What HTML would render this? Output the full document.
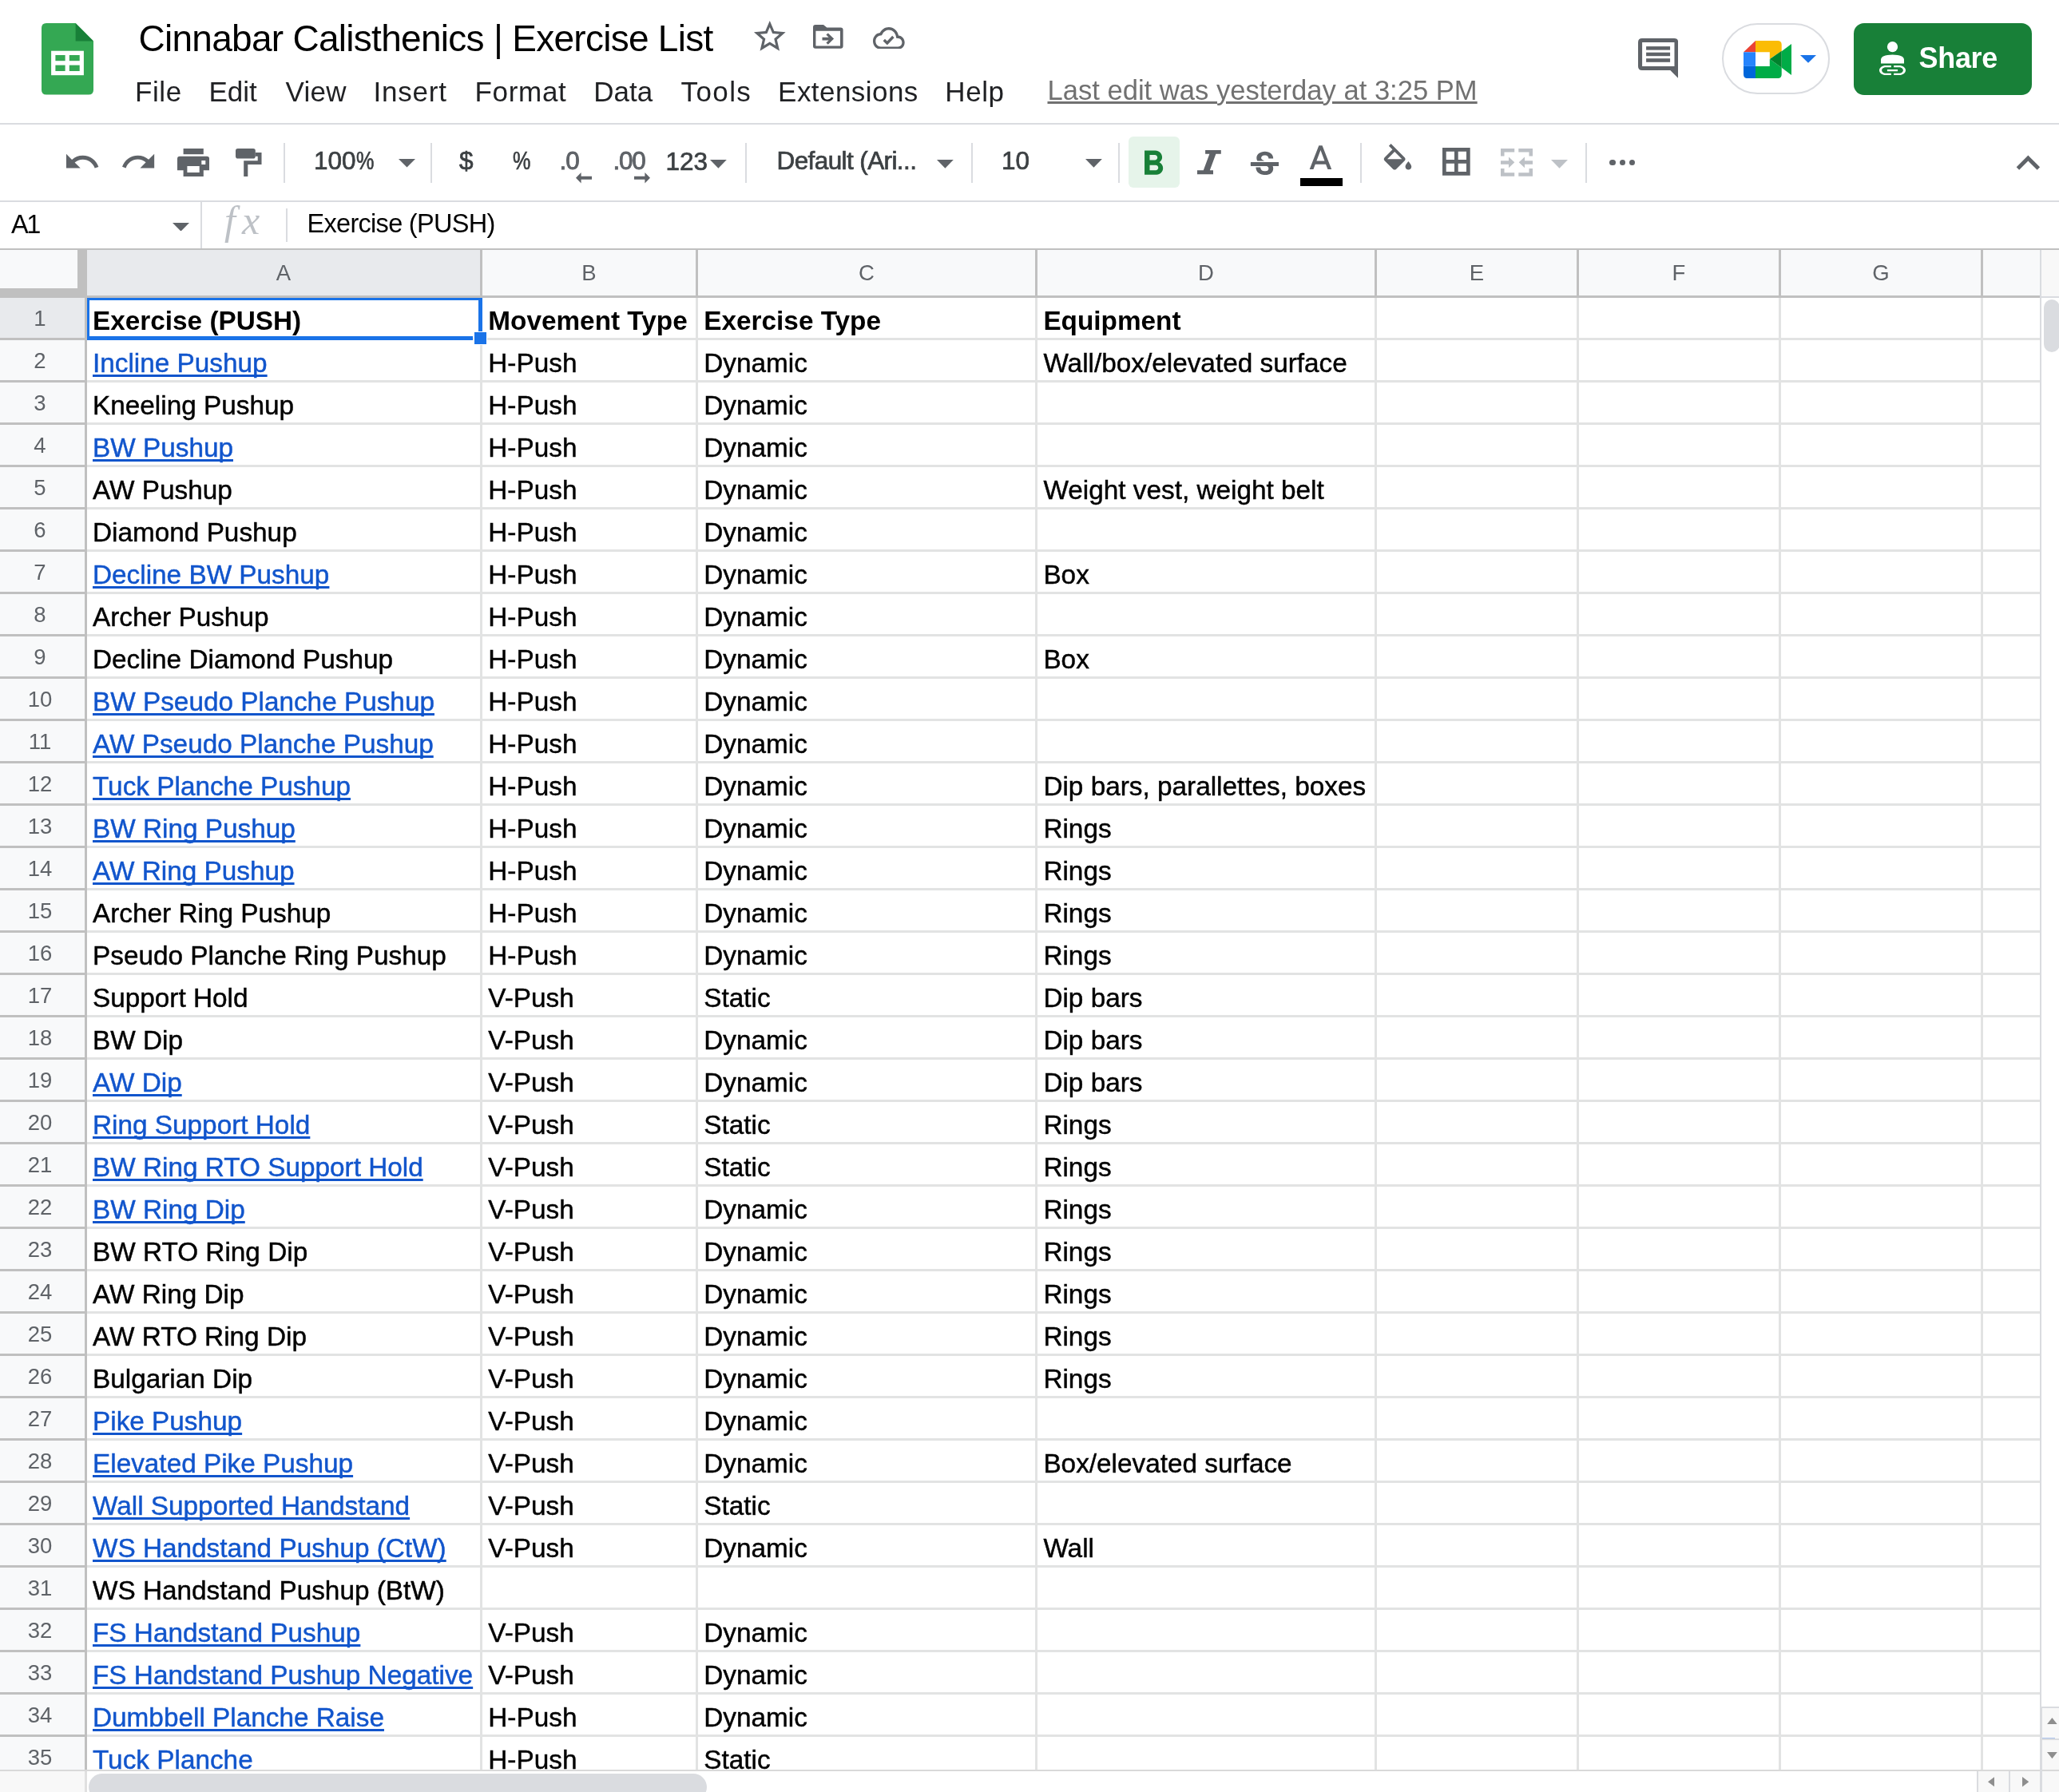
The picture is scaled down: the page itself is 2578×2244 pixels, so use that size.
<!DOCTYPE html>
<html><head><meta charset="utf-8"><title>Cinnabar Calisthenics | Exercise List</title>
<style>
*{margin:0;padding:0;box-sizing:border-box}
html,body{width:2578px;height:2244px;overflow:hidden;background:#fff;font-family:"Liberation Sans",sans-serif;position:relative}
.a{position:absolute;display:block}
.t{position:absolute;white-space:nowrap;line-height:1}
</style></head><body><div id="root" style="position:absolute;left:0;top:0;width:2578px;height:2244px;will-change:transform">
<svg class="a" style="left:52px;top:29px;" width="65" height="89.5" viewBox="0 0 65 89.5" preserveAspectRatio="none"><path d="M6,0 H42.6 L65,22.4 V83.5 Q65,89.5 59,89.5 H6 Q0,89.5 0,83.5 V6 Q0,0 6,0 Z" fill="#34a853"/><path d="M42.6,0 V22.4 H65 Z" fill="#188038"/><rect x="12.1" y="34.7" width="40.8" height="30.5" fill="#fff"/><rect x="17.4" y="40" width="12.2" height="7.2" fill="#34a853"/><rect x="34.8" y="40" width="12.9" height="7.2" fill="#34a853"/><rect x="17.4" y="52.6" width="12.2" height="7.4" fill="#34a853"/><rect x="34.8" y="52.6" width="12.9" height="7.4" fill="#34a853"/></svg>
<div class="t" style="left:173.50px;top:25.46px;font-size:46px;color:#000;font-weight:normal;letter-spacing:-0.72px">Cinnabar Calisthenics | Exercise List</div>
<svg class="a" style="left:939.6px;top:21.6px;" width="47.6" height="47.6" viewBox="0 0 24 24" preserveAspectRatio="none"><path fill="#5f6368" d="M22 9.24l-7.19-.62L12 2 9.19 8.63 2 9.24l5.46 4.73L5.82 21 12 17.27 18.18 21l-1.63-7.03L22 9.24zM12 15.4l-3.76 2.27 1-4.28-3.32-2.88 4.38-.38L12 6.1l1.71 4.04 4.38.38-3.32 2.88 1 4.28L12 15.4z"/></svg>
<svg class="a" style="left:1018.2px;top:31.2px;" width="37.6" height="29.8" viewBox="0 0 37.6 29.8" preserveAspectRatio="none"><path fill="#5f6368" fill-rule="evenodd" d="M3,0 H13 L17.3,3.6 H34.6 Q37.6,3.6 37.6,6.6 V26.8 Q37.6,29.8 34.6,29.8 H3 Q0,29.8 0,26.8 V3 Q0,0 3,0 Z M3.4,7.8 V26.5 H34 V7.8 Z"/><path fill="#5f6368" d="M11.5,15.8 H19.6 L16.4,12.6 L18.8,10.4 L26.1,17.6 L18.8,24.8 L16.4,22.6 L19.6,19.4 H11.5 Z"/></svg>
<svg class="a" style="left:1093.4px;top:33.6px;" width="39.7" height="27.9" viewBox="0 4 24 16" preserveAspectRatio="none"><path fill="#5f6368" d="M19.35 10.04C18.67 6.59 15.64 4 12 4 9.11 4 6.6 5.64 5.35 8.04 2.34 8.36 0 10.91 0 14c0 3.31 2.69 6 6 6h13c2.76 0 5-2.24 5-5 0-2.64-2.05-4.78-4.65-4.96zM19 18H6c-2.21 0-4-1.79-4-4 0-2.05 1.53-3.76 3.56-3.97l1.07-.11.5-.95C8.08 7.14 9.94 6 12 6c2.62 0 4.88 1.86 5.39 4.43l.3 1.5 1.53.11c1.56.1 2.78 1.41 2.78 2.96 0 1.65-1.35 3-3 3z"/></svg>
<svg class="a" style="left:1105px;top:44px;" width="15" height="12" viewBox="0 0 15 12" preserveAspectRatio="none"><polyline points="1.8,6 5.8,10 13.4,2" fill="none" stroke="#5f6368" stroke-width="3.4"/></svg>
<div class="t" style="left:169.00px;top:96.57px;font-size:35px;color:#202124;font-weight:normal;letter-spacing:0.6px">File</div>
<div class="t" style="left:261.50px;top:96.57px;font-size:35px;color:#202124;font-weight:normal;letter-spacing:0px">Edit</div>
<div class="t" style="left:357.60px;top:96.57px;font-size:35px;color:#202124;font-weight:normal;letter-spacing:0.2px">View</div>
<div class="t" style="left:467.40px;top:96.57px;font-size:35px;color:#202124;font-weight:normal;letter-spacing:0.8px">Insert</div>
<div class="t" style="left:594.50px;top:96.57px;font-size:35px;color:#202124;font-weight:normal;letter-spacing:0.7px">Format</div>
<div class="t" style="left:743.30px;top:96.57px;font-size:35px;color:#202124;font-weight:normal;letter-spacing:0px">Data</div>
<div class="t" style="left:852.50px;top:96.57px;font-size:35px;color:#202124;font-weight:normal;letter-spacing:1.4px">Tools</div>
<div class="t" style="left:974.10px;top:96.57px;font-size:35px;color:#202124;font-weight:normal;letter-spacing:0.45px">Extensions</div>
<div class="t" style="left:1183.30px;top:96.57px;font-size:35px;color:#202124;font-weight:normal;letter-spacing:0.6px">Help</div>
<div class="t" style="left:1311.50px;top:95.71px;font-size:34.6px;color:#717171;font-weight:normal;text-decoration:underline;text-underline-offset:2px;text-decoration-thickness:2.7px">Last edit was yesterday at 3:25 PM</div>
<svg class="a" style="left:2050.7px;top:48px;" width="50.2" height="50" viewBox="0 0 50.2 50" preserveAspectRatio="none"><path fill="#5f6368" fill-rule="evenodd" d="M5,0 H45.2 Q50.2,0 50.2,5 V50 L40.3,39.9 H5 Q0,39.9 0,34.9 V5 Q0,0 5,0 Z M5.1,5 V35.1 H45.5 V5 Z"/><rect x="10.1" y="10.1" width="30" height="4.5" fill="#5f6368"/><rect x="10.1" y="17.7" width="30" height="4.5" fill="#5f6368"/><rect x="10.1" y="25.2" width="30" height="4.6" fill="#5f6368"/></svg>
<div class="a" style="left:2156.2px;top:29.4px;width:134.5px;height:89px;border:2.5px solid #dadce0;border-radius:45px;box-sizing:border-box"></div>
<svg class="a" style="left:2183px;top:50.9px;" width="60" height="47.1" viewBox="0 0 60 47.1" preserveAspectRatio="none"><path d="M0,14.3 L15,0 V14.3 Z" fill="#ea4335"/><path d="M15,0 H42.7 Q47.7,0 47.7,5 V14.3 L47.7,13 L32.8,22.7 H32.8 V14.3 H15 Z" fill="#fbbc04"/><rect x="0" y="14.3" width="15" height="17.6" fill="#2684fc"/><path d="M0,31.9 H15 V47.1 H5 Q0,47.1 0,42.1 Z" fill="#0066da"/><path d="M15,31.9 H32.8 V23.1 L47.7,33.7 V42.1 Q47.7,47.1 42.7,47.1 H15 Z" fill="#00ac47"/><path d="M47.7,13.2 L60,4.1 V42.9 L47.7,33.7 Z" fill="#00ac47"/><path d="M32.8,23.1 L47.7,12.7 V33.7 Z" fill="#00832d"/></svg>
<svg class="a" style="left:2254px;top:69px;" width="20" height="9.700000000000003" viewBox="0 0 20 9.700000000000003" preserveAspectRatio="none"><polygon points="0,0 20,0 10.0,9.700000000000003" fill="#1a73e8"/></svg>
<div class="a" style="left:2321px;top:28.8px;width:223px;height:90px;background:#188038;border-radius:13px"></div>
<svg class="a" style="left:2353px;top:51.5px;" width="33" height="30" viewBox="0 0 33 30" preserveAspectRatio="none"><circle cx="16.5" cy="6.7" r="6.6" fill="#fff"/><path d="M2,27.5 V23 Q2,16.5 16.5,16.5 Q31,16.5 31,23 V27.5 Z" fill="#fff"/></svg>
<svg class="a" style="left:2353px;top:81.8px;" width="33" height="12.2" viewBox="2 7 20 10" preserveAspectRatio="none"><path fill="#fff" d="M3.9 12c0-1.71 1.39-3.1 3.1-3.1h4V7H7c-2.76 0-5 2.24-5 5s2.24 5 5 5h4v-1.9H7c-1.71 0-3.1-1.39-3.1-3.1zM8 13h8v-2H8v2zm9-6h-4v1.9h4c1.71 0 3.1 1.39 3.1 3.1s-1.39 3.1-3.1 3.1h-4V17h4c2.760 0 5-2.24 5-5s-2.24-5-5-5z"/></svg>
<div class="t" style="left:2402.50px;top:55.03px;font-size:36px;color:#fff;font-weight:bold;letter-spacing:-0.3px">Share</div>
<div class="a" style="left:0px;top:154px;width:2578px;height:2px;background:#dadce0;"></div>
<svg class="a" style="left:79.05px;top:179.4px;" width="47.4" height="47.4" viewBox="0 0 24 24" preserveAspectRatio="none"><path fill="#5f6368" d="M12.5 8c-2.650 0-5.050.99-6.9 2.6L2 7v9h9l-3.62-3.62c1.39-1.16 3.16-1.88 5.12-1.88 3.54 0 6.55 2.31 7.6 5.5l2.37-.78C21.08 11.03 17.15 8 12.5 8z"/></svg>
<svg class="a" style="left:149.8px;top:179.4px;" width="47.1" height="47.1" viewBox="0 0 24 24" preserveAspectRatio="none"><path fill="#5f6368" d="M18.4 10.6C16.55 8.99 14.15 8 11.5 8c-4.65 0-8.58 3.03-9.96 7.22L3.9 16c1.05-3.19 4.05-5.5 7.6-5.5 1.95 0 3.73.72 5.12 1.88L13 16h9V7l-3.6 3.6z"/></svg>
<svg class="a" style="left:221.7px;top:186px;" width="40.1" height="35" viewBox="0 0 40.1 35" preserveAspectRatio="none"><rect x="7.6" y="0" width="25.2" height="7.2" fill="#5f6368"/><path fill="#5f6368" d="M3,9.8 H37.1 Q40.1,9.8 40.1,12.8 V27.2 H32.8 V35 H7.6 V27.2 H0 V12.8 Q0,9.8 3,9.8 Z M12.4,22 V30.1 H27.7 V22 Z"/><rect x="30.3" y="15" width="5" height="5" fill="#fff"/></svg>
<svg class="a" style="left:295.3px;top:186px;" width="32.5" height="35" viewBox="0 0 32.5 35" preserveAspectRatio="none"><rect x="0" y="0" width="24.8" height="12.6" rx="2.8" fill="#5f6368"/><path fill="#5f6368" d="M24.8,5 H32.5 V19.9 H15.3 V35 H10.2 V15.2 H27.7 V9.7 H24.8 Z"/></svg>
<div class="a" style="left:355px;top:179px;width:2px;height:49.5px;background:#dadce0;"></div>
<div class="t" style="left:393.00px;top:185.54px;font-size:31.5px;color:#3c4043;font-weight:normal;-webkit-text-stroke:0.7px #3c4043">100<span style="display:inline-block;transform:scaleX(0.8);transform-origin:0 0">%</span></div>
<svg class="a" style="left:499px;top:199px;" width="21" height="10.5" viewBox="0 0 21 10.5" preserveAspectRatio="none"><polygon points="0,0 21,0 10.5,10.5" fill="#5f6368"/></svg>
<div class="a" style="left:539.2px;top:179px;width:2px;height:49.5px;background:#dadce0;"></div>
<div class="t" style="left:575.00px;top:185.54px;font-size:31.5px;color:#3c4043;font-weight:normal;-webkit-text-stroke:0.7px #3c4043">$</div>
<div class="t" style="left:642.00px;top:185.54px;font-size:31.5px;color:#3c4043;font-weight:normal;-webkit-text-stroke:0.7px #3c4043"><span style="display:inline-block;transform:scaleX(0.8);transform-origin:0 0">%</span></div>
<div class="t" style="left:700.50px;top:186.04px;font-size:31.5px;color:#5f6368;font-weight:normal;letter-spacing:-1px;-webkit-text-stroke:0.9px #5f6368">.0</div>
<svg class="a" style="left:721px;top:216px;" width="20" height="13.6" viewBox="0 0 20 13.6" preserveAspectRatio="none"><path fill="#5f6368" d="M0,6.8 L6.6,0 V4.8 H20 V8.8 H6.6 V13.6 Z"/></svg>
<div class="t" style="left:767.50px;top:186.04px;font-size:31.5px;color:#5f6368;font-weight:normal;letter-spacing:-1.2px;-webkit-text-stroke:0.9px #5f6368">.00</div>
<svg class="a" style="left:794.4px;top:216px;" width="20" height="13.6" viewBox="0 0 20 13.6" preserveAspectRatio="none"><path fill="#5f6368" d="M20,6.8 L13.4,0 V4.8 H0 V8.8 H13.4 V13.6 Z"/></svg>
<div class="t" style="left:833.50px;top:186.54px;font-size:31.5px;color:#3c4043;font-weight:normal;-webkit-text-stroke:0.7px #3c4043">123</div>
<svg class="a" style="left:889px;top:200px;" width="20.799999999999955" height="10.699999999999989" viewBox="0 0 20.799999999999955 10.699999999999989" preserveAspectRatio="none"><polygon points="0,0 20.799999999999955,0 10.399999999999977,10.699999999999989" fill="#5f6368"/></svg>
<div class="a" style="left:933px;top:179px;width:2px;height:49.5px;background:#dadce0;"></div>
<div class="t" style="left:972.50px;top:186.04px;font-size:31.5px;color:#3c4043;font-weight:normal;-webkit-text-stroke:0.7px #3c4043;letter-spacing:-0.6px">Default (Ari...</div>
<svg class="a" style="left:1173.2px;top:200px;" width="20.799999999999955" height="10.699999999999989" viewBox="0 0 20.799999999999955 10.699999999999989" preserveAspectRatio="none"><polygon points="0,0 20.799999999999955,0 10.399999999999977,10.699999999999989" fill="#5f6368"/></svg>
<div class="a" style="left:1215.5px;top:179px;width:2px;height:49.5px;background:#dadce0;"></div>
<div class="t" style="left:1254.00px;top:185.54px;font-size:31.5px;color:#3c4043;font-weight:normal;-webkit-text-stroke:0.7px #3c4043">10</div>
<svg class="a" style="left:1358.9px;top:199px;" width="20.899999999999864" height="10.800000000000011" viewBox="0 0 20.899999999999864 10.800000000000011" preserveAspectRatio="none"><polygon points="0,0 20.899999999999864,0 10.449999999999932,10.800000000000011" fill="#5f6368"/></svg>
<div class="a" style="left:1399.5px;top:179px;width:2px;height:49.5px;background:#dadce0;"></div>
<div class="a" style="left:1413.3px;top:170.9px;width:63.3px;height:63.7px;background:#e6f4ea;border-radius:6px"></div>
<svg class="a" style="left:1418px;top:180.3px;" width="51.6" height="51.6" viewBox="0 0 24 24" preserveAspectRatio="none"><path fill="#188038" d="M15.6 10.79c.97-.67 1.65-1.77 1.65-2.79 0-2.26-1.75-4-4-4H7v14h7.04c2.09 0 3.71-1.7 3.71-3.79 0-1.52-.86-2.82-2.15-3.42zM10 6.5h3c.83 0 1.5.67 1.5 1.5s-.67 1.5-1.5 1.5h-3v-3zm3.5 9H10v-3h3.5c.83 0 1.5.67 1.5 1.5s-.67 1.5-1.5 1.5z"/></svg>
<svg class="a" style="left:1499px;top:188.4px;" width="29.8" height="30.2" viewBox="0 0 29.8 30.2" preserveAspectRatio="none"><path fill="#5f6368" d="M10.1,0 H29.8 V4.8 H23.4 L15.8,25.2 H20 V30.2 H0 V25.2 H7.8 L15.4,4.8 H10.1 Z"/></svg>
<svg class="a" style="left:1560.2px;top:184px;" width="46.6" height="46.6" viewBox="0 0 24 24" preserveAspectRatio="none"><path fill="#5f6368" d="M7.24 8.75c-.26-.48-.39-1.03-.39-1.67 0-.61.13-1.16.4-1.67.26-.5.63-.93 1.11-1.29.48-.35 1.05-.63 1.7-.83.66-.19 1.39-.29 2.18-.29.81 0 1.54.11 2.21.34.66.22 1.23.54 1.69.94.47.4.83.88 1.08 1.43.25.55.38 1.15.38 1.81h-3.01c0-.31-.05-.59-.15-.85-.09-.27-.24-.49-.44-.68-.2-.19-.45-.33-.75-.44-.3-.1-.66-.16-1.060-.16-.39 0-.74.04-1.03.13-.29.09-.53.21-.72.36-.19.16-.34.34-.44.55-.1.21-.15.43-.15.66 0 .48.25.88.74 1.21.38.25.77.48 1.41.7H7.39c-.05-.08-.11-.17-.15-.25zM21 12v-2H3v2h9.62c.18.07.4.14.55.2.37.17.66.34.87.51.21.17.35.36.43.57.07.2.11.43.11.69 0 .23-.05.45-.14.66-.09.2-.23.38-.42.53-.19.15-.42.26-.71.35-.29.08-.63.13-1.01.13-.43 0-.83-.04-1.18-.13s-.66-.23-.91-.42c-.25-.19-.45-.44-.59-.75-.14-.31-.25-.76-.25-1.21H6.4c0 .55.08 1.13.24 1.58.16.45.37.85.65 1.21.28.35.6.66.98.92.37.26.78.48 1.22.65.44.17.9.3 1.38.39.48.08.96.13 1.44.13.8 0 1.53-.09 2.18-.28s1.21-.45 1.67-.79c.46-.34.82-.77 1.07-1.27s.38-1.07.38-1.71c0-.6-.1-1.14-.31-1.61-.05-.11-.11-.23-.17-.33H21z"/></svg>
<div class="a" style="left:1566px;top:203.3px;width:35px;height:5.2px;background:#5f6368;"></div>
<svg class="a" style="left:1628.3px;top:175.9px;" width="50.9" height="50.9" viewBox="0 0 24 24" preserveAspectRatio="none"><path fill="#5f6368" d="M11 3L5.5 17h2.25l1.12-3h6.25l1.12 3h2.25L13 3h-2zm-1.38 9L12 5.67 14.38 12H9.62z"/></svg>
<div class="a" style="left:1628px;top:223px;width:53px;height:10px;background:#000;"></div>
<div class="a" style="left:1702.5px;top:179px;width:2px;height:49.5px;background:#dadce0;"></div>
<svg class="a" style="left:1726.5px;top:180px;" width="46" height="46" viewBox="0 0 24 24" preserveAspectRatio="none"><path fill="#5f6368" d="M16.56 8.94L7.62 0 6.21 1.41l2.38 2.38-5.15 5.15c-.59.59-.59 1.54 0 2.12l5.5 5.5c.29.29.68.44 1.06.44s.77-.15 1.06-.44l5.5-5.5c.59-.58.59-1.53 0-2.12zM5.21 10L10 5.21 14.79 10H5.21zM19 11.5s-2 2.17-2 3.5c0 1.1.9 2 2 2s2-.9 2-2c0-1.33-2-3.5-2-3.5z"/></svg>
<svg class="a" style="left:1806px;top:185px;" width="34.7" height="34.7" viewBox="0 0 34.7 34.7" preserveAspectRatio="none"><path fill="#5f6368" fill-rule="evenodd" d="M0,0 H34.7 V34.7 H0 Z M4.7,4.7 V15 H15 V4.7 Z M19.7,4.7 V15 H30 V4.7 Z M4.7,19.7 V30 H15 V19.7 Z M19.7,19.7 V30 H30 V19.7 Z"/></svg>
<svg class="a" style="left:1879px;top:186.2px;" width="40" height="34.7" viewBox="0 0 40 34.7" preserveAspectRatio="none"><path fill="#bdc1c6" d="M0,0 H17.2 V4.5 H4.5 V9.5 H0 Z M22.3,0 H40 V9.5 H35.5 V4.5 H22.3 Z M0,25 H4.5 V30.2 H17.2 V34.7 H0 Z M35.5,25 H40 V34.7 H22.3 V30.2 H35.5 Z"/><path fill="#bdc1c6" d="M0,15.2 H10 V10.5 L17.3,17.3 L10,24.3 V19.7 H0 Z M40,15.2 H30 V10.5 L22.7,17.3 L30,24.3 V19.7 H40 Z"/></svg>
<svg class="a" style="left:1942px;top:200px;" width="21" height="10.699999999999989" viewBox="0 0 21 10.699999999999989" preserveAspectRatio="none"><polygon points="0,0 21,0 10.5,10.699999999999989" fill="#bdc1c6"/></svg>
<div class="a" style="left:1985px;top:179px;width:2px;height:49.5px;background:#dadce0;"></div>
<div class="a" style="left:2015.2px;top:199.70000000000002px;width:7.4px;height:7.4px;border-radius:50%;background:#5f6368"></div>
<div class="a" style="left:2027.6px;top:199.70000000000002px;width:7.4px;height:7.4px;border-radius:50%;background:#5f6368"></div>
<div class="a" style="left:2039.8999999999999px;top:199.70000000000002px;width:7.4px;height:7.4px;border-radius:50%;background:#5f6368"></div>
<svg class="a" style="left:2510.2px;top:175px;" width="58.8" height="58.8" viewBox="0 0 24 24" preserveAspectRatio="none"><path fill="#5f6368" d="M12 8l-6 6 1.41 1.41L12 10.83l4.59 4.58L18 14z"/></svg>
<div class="a" style="left:0px;top:251px;width:2578px;height:2px;background:#dadce0;"></div>
<div class="t" style="left:14.00px;top:265.29px;font-size:32.5px;color:#000;font-weight:normal;letter-spacing:-2.5px">A1</div>
<svg class="a" style="left:216px;top:278.9px;" width="21" height="10.600000000000023" viewBox="0 0 21 10.600000000000023" preserveAspectRatio="none"><polygon points="0,0 21,0 10.5,10.600000000000023" fill="#5f6368"/></svg>
<div class="a" style="left:251px;top:253px;width:2px;height:58px;background:#dadce0;"></div>
<div class="t" style="left:281.00px;top:250.68px;font-size:50px;color:#bdc1c6;font-weight:normal;font-family:'Liberation Serif',serif"><i>f</i><i style="margin-left:8px">x</i></div>
<div class="a" style="left:357.5px;top:261px;width:2.5px;height:41.5px;background:#dadce0;"></div>
<div class="t" style="left:384.50px;top:264.29px;font-size:32.5px;color:#000;font-weight:normal;letter-spacing:-0.7px">Exercise (PUSH)</div>
<div class="a" style="left:0px;top:311px;width:2578px;height:2px;background:#c0c0c0;"></div>
<div class="a" style="left:109px;top:313px;width:2445px;height:57px;background:#f8f9fa;"></div>
<div class="a" style="left:109px;top:313px;width:492px;height:57px;background:#e8eaed;"></div>
<div class="a" style="left:2556px;top:313px;width:22px;height:58px;background:#f8f8f8;"></div>
<div class="a" style="left:0px;top:313px;width:97px;height:48px;background:#f8f9fa;"></div>
<div class="a" style="left:97px;top:313px;width:12px;height:60px;background:#c0c0c0;"></div>
<div class="a" style="left:0px;top:361px;width:97px;height:12px;background:#c0c0c0;"></div>
<div class="a" style="left:109px;top:370px;width:2445px;height:3px;background:#c0c0c0;"></div>
<div class="a" style="left:2556px;top:371px;width:22px;height:2px;background:#dadce0;"></div>
<div class="a" style="left:601px;top:313px;width:3px;height:57px;background:#c0c0c0;"></div>
<div class="a" style="left:871px;top:313px;width:3px;height:57px;background:#c0c0c0;"></div>
<div class="a" style="left:1296px;top:313px;width:3px;height:57px;background:#c0c0c0;"></div>
<div class="a" style="left:1721px;top:313px;width:3px;height:57px;background:#c0c0c0;"></div>
<div class="a" style="left:1974px;top:313px;width:3px;height:57px;background:#c0c0c0;"></div>
<div class="a" style="left:2227px;top:313px;width:3px;height:57px;background:#c0c0c0;"></div>
<div class="a" style="left:2480px;top:313px;width:3px;height:57px;background:#c0c0c0;"></div>
<div class="t" style="left:109px;width:492px;text-align:center;top:327.72px;font-size:27.5px;color:#5f6368">A</div>
<div class="t" style="left:604px;width:267px;text-align:center;top:327.72px;font-size:27.5px;color:#5f6368">B</div>
<div class="t" style="left:874px;width:422px;text-align:center;top:327.72px;font-size:27.5px;color:#5f6368">C</div>
<div class="t" style="left:1299px;width:422px;text-align:center;top:327.72px;font-size:27.5px;color:#5f6368">D</div>
<div class="t" style="left:1724px;width:250px;text-align:center;top:327.72px;font-size:27.5px;color:#5f6368">E</div>
<div class="t" style="left:1977px;width:250px;text-align:center;top:327.72px;font-size:27.5px;color:#5f6368">F</div>
<div class="t" style="left:2230px;width:250px;text-align:center;top:327.72px;font-size:27.5px;color:#5f6368">G</div>
<div class="a" style="left:0px;top:373px;width:106px;height:1843px;background:#f8f9fa;"></div>
<div class="a" style="left:0px;top:373px;width:106px;height:50px;background:#e8eaed;"></div>
<div class="a" style="left:106px;top:373px;width:3px;height:1843px;background:#c0c0c0;"></div>
<div class="a" style="left:601px;top:373px;width:3px;height:1843px;background:#e2e3e3;"></div>
<div class="a" style="left:871px;top:373px;width:3px;height:1843px;background:#e2e3e3;"></div>
<div class="a" style="left:1296px;top:373px;width:3px;height:1843px;background:#e2e3e3;"></div>
<div class="a" style="left:1721px;top:373px;width:3px;height:1843px;background:#e2e3e3;"></div>
<div class="a" style="left:1974px;top:373px;width:3px;height:1843px;background:#e2e3e3;"></div>
<div class="a" style="left:2227px;top:373px;width:3px;height:1843px;background:#e2e3e3;"></div>
<div class="a" style="left:2480px;top:373px;width:3px;height:1843px;background:#e2e3e3;"></div>
<div class="a" style="left:2554px;top:313px;width:2px;height:1905px;background:#dadce0;"></div>
<div class="a" style="left:0px;top:423px;width:106px;height:3px;background:#c0c0c0;"></div>
<div class="a" style="left:109px;top:423px;width:2445px;height:3px;background:#e2e3e3;"></div>
<div class="a" style="left:0px;top:476px;width:106px;height:3px;background:#c0c0c0;"></div>
<div class="a" style="left:109px;top:476px;width:2445px;height:3px;background:#e2e3e3;"></div>
<div class="a" style="left:0px;top:529px;width:106px;height:3px;background:#c0c0c0;"></div>
<div class="a" style="left:109px;top:529px;width:2445px;height:3px;background:#e2e3e3;"></div>
<div class="a" style="left:0px;top:582px;width:106px;height:3px;background:#c0c0c0;"></div>
<div class="a" style="left:109px;top:582px;width:2445px;height:3px;background:#e2e3e3;"></div>
<div class="a" style="left:0px;top:635px;width:106px;height:3px;background:#c0c0c0;"></div>
<div class="a" style="left:109px;top:635px;width:2445px;height:3px;background:#e2e3e3;"></div>
<div class="a" style="left:0px;top:688px;width:106px;height:3px;background:#c0c0c0;"></div>
<div class="a" style="left:109px;top:688px;width:2445px;height:3px;background:#e2e3e3;"></div>
<div class="a" style="left:0px;top:741px;width:106px;height:3px;background:#c0c0c0;"></div>
<div class="a" style="left:109px;top:741px;width:2445px;height:3px;background:#e2e3e3;"></div>
<div class="a" style="left:0px;top:794px;width:106px;height:3px;background:#c0c0c0;"></div>
<div class="a" style="left:109px;top:794px;width:2445px;height:3px;background:#e2e3e3;"></div>
<div class="a" style="left:0px;top:847px;width:106px;height:3px;background:#c0c0c0;"></div>
<div class="a" style="left:109px;top:847px;width:2445px;height:3px;background:#e2e3e3;"></div>
<div class="a" style="left:0px;top:900px;width:106px;height:3px;background:#c0c0c0;"></div>
<div class="a" style="left:109px;top:900px;width:2445px;height:3px;background:#e2e3e3;"></div>
<div class="a" style="left:0px;top:953px;width:106px;height:3px;background:#c0c0c0;"></div>
<div class="a" style="left:109px;top:953px;width:2445px;height:3px;background:#e2e3e3;"></div>
<div class="a" style="left:0px;top:1006px;width:106px;height:3px;background:#c0c0c0;"></div>
<div class="a" style="left:109px;top:1006px;width:2445px;height:3px;background:#e2e3e3;"></div>
<div class="a" style="left:0px;top:1059px;width:106px;height:3px;background:#c0c0c0;"></div>
<div class="a" style="left:109px;top:1059px;width:2445px;height:3px;background:#e2e3e3;"></div>
<div class="a" style="left:0px;top:1112px;width:106px;height:3px;background:#c0c0c0;"></div>
<div class="a" style="left:109px;top:1112px;width:2445px;height:3px;background:#e2e3e3;"></div>
<div class="a" style="left:0px;top:1165px;width:106px;height:3px;background:#c0c0c0;"></div>
<div class="a" style="left:109px;top:1165px;width:2445px;height:3px;background:#e2e3e3;"></div>
<div class="a" style="left:0px;top:1218px;width:106px;height:3px;background:#c0c0c0;"></div>
<div class="a" style="left:109px;top:1218px;width:2445px;height:3px;background:#e2e3e3;"></div>
<div class="a" style="left:0px;top:1271px;width:106px;height:3px;background:#c0c0c0;"></div>
<div class="a" style="left:109px;top:1271px;width:2445px;height:3px;background:#e2e3e3;"></div>
<div class="a" style="left:0px;top:1324px;width:106px;height:3px;background:#c0c0c0;"></div>
<div class="a" style="left:109px;top:1324px;width:2445px;height:3px;background:#e2e3e3;"></div>
<div class="a" style="left:0px;top:1377px;width:106px;height:3px;background:#c0c0c0;"></div>
<div class="a" style="left:109px;top:1377px;width:2445px;height:3px;background:#e2e3e3;"></div>
<div class="a" style="left:0px;top:1430px;width:106px;height:3px;background:#c0c0c0;"></div>
<div class="a" style="left:109px;top:1430px;width:2445px;height:3px;background:#e2e3e3;"></div>
<div class="a" style="left:0px;top:1483px;width:106px;height:3px;background:#c0c0c0;"></div>
<div class="a" style="left:109px;top:1483px;width:2445px;height:3px;background:#e2e3e3;"></div>
<div class="a" style="left:0px;top:1536px;width:106px;height:3px;background:#c0c0c0;"></div>
<div class="a" style="left:109px;top:1536px;width:2445px;height:3px;background:#e2e3e3;"></div>
<div class="a" style="left:0px;top:1589px;width:106px;height:3px;background:#c0c0c0;"></div>
<div class="a" style="left:109px;top:1589px;width:2445px;height:3px;background:#e2e3e3;"></div>
<div class="a" style="left:0px;top:1642px;width:106px;height:3px;background:#c0c0c0;"></div>
<div class="a" style="left:109px;top:1642px;width:2445px;height:3px;background:#e2e3e3;"></div>
<div class="a" style="left:0px;top:1695px;width:106px;height:3px;background:#c0c0c0;"></div>
<div class="a" style="left:109px;top:1695px;width:2445px;height:3px;background:#e2e3e3;"></div>
<div class="a" style="left:0px;top:1748px;width:106px;height:3px;background:#c0c0c0;"></div>
<div class="a" style="left:109px;top:1748px;width:2445px;height:3px;background:#e2e3e3;"></div>
<div class="a" style="left:0px;top:1801px;width:106px;height:3px;background:#c0c0c0;"></div>
<div class="a" style="left:109px;top:1801px;width:2445px;height:3px;background:#e2e3e3;"></div>
<div class="a" style="left:0px;top:1854px;width:106px;height:3px;background:#c0c0c0;"></div>
<div class="a" style="left:109px;top:1854px;width:2445px;height:3px;background:#e2e3e3;"></div>
<div class="a" style="left:0px;top:1907px;width:106px;height:3px;background:#c0c0c0;"></div>
<div class="a" style="left:109px;top:1907px;width:2445px;height:3px;background:#e2e3e3;"></div>
<div class="a" style="left:0px;top:1960px;width:106px;height:3px;background:#c0c0c0;"></div>
<div class="a" style="left:109px;top:1960px;width:2445px;height:3px;background:#e2e3e3;"></div>
<div class="a" style="left:0px;top:2013px;width:106px;height:3px;background:#c0c0c0;"></div>
<div class="a" style="left:109px;top:2013px;width:2445px;height:3px;background:#e2e3e3;"></div>
<div class="a" style="left:0px;top:2066px;width:106px;height:3px;background:#c0c0c0;"></div>
<div class="a" style="left:109px;top:2066px;width:2445px;height:3px;background:#e2e3e3;"></div>
<div class="a" style="left:0px;top:2119px;width:106px;height:3px;background:#c0c0c0;"></div>
<div class="a" style="left:109px;top:2119px;width:2445px;height:3px;background:#e2e3e3;"></div>
<div class="a" style="left:0px;top:2172px;width:106px;height:3px;background:#c0c0c0;"></div>
<div class="a" style="left:109px;top:2172px;width:2445px;height:3px;background:#e2e3e3;"></div>
<div class="t" style="left:0;width:100px;text-align:center;top:384.72px;font-size:27.5px;color:#5f6368">1</div>
<div class="t" style="left:0;width:100px;text-align:center;top:437.72px;font-size:27.5px;color:#5f6368">2</div>
<div class="t" style="left:0;width:100px;text-align:center;top:490.72px;font-size:27.5px;color:#5f6368">3</div>
<div class="t" style="left:0;width:100px;text-align:center;top:543.72px;font-size:27.5px;color:#5f6368">4</div>
<div class="t" style="left:0;width:100px;text-align:center;top:596.72px;font-size:27.5px;color:#5f6368">5</div>
<div class="t" style="left:0;width:100px;text-align:center;top:649.72px;font-size:27.5px;color:#5f6368">6</div>
<div class="t" style="left:0;width:100px;text-align:center;top:702.72px;font-size:27.5px;color:#5f6368">7</div>
<div class="t" style="left:0;width:100px;text-align:center;top:755.72px;font-size:27.5px;color:#5f6368">8</div>
<div class="t" style="left:0;width:100px;text-align:center;top:808.72px;font-size:27.5px;color:#5f6368">9</div>
<div class="t" style="left:0;width:100px;text-align:center;top:861.72px;font-size:27.5px;color:#5f6368">10</div>
<div class="t" style="left:0;width:100px;text-align:center;top:914.72px;font-size:27.5px;color:#5f6368">11</div>
<div class="t" style="left:0;width:100px;text-align:center;top:967.72px;font-size:27.5px;color:#5f6368">12</div>
<div class="t" style="left:0;width:100px;text-align:center;top:1020.72px;font-size:27.5px;color:#5f6368">13</div>
<div class="t" style="left:0;width:100px;text-align:center;top:1073.72px;font-size:27.5px;color:#5f6368">14</div>
<div class="t" style="left:0;width:100px;text-align:center;top:1126.72px;font-size:27.5px;color:#5f6368">15</div>
<div class="t" style="left:0;width:100px;text-align:center;top:1179.72px;font-size:27.5px;color:#5f6368">16</div>
<div class="t" style="left:0;width:100px;text-align:center;top:1232.72px;font-size:27.5px;color:#5f6368">17</div>
<div class="t" style="left:0;width:100px;text-align:center;top:1285.72px;font-size:27.5px;color:#5f6368">18</div>
<div class="t" style="left:0;width:100px;text-align:center;top:1338.72px;font-size:27.5px;color:#5f6368">19</div>
<div class="t" style="left:0;width:100px;text-align:center;top:1391.72px;font-size:27.5px;color:#5f6368">20</div>
<div class="t" style="left:0;width:100px;text-align:center;top:1444.72px;font-size:27.5px;color:#5f6368">21</div>
<div class="t" style="left:0;width:100px;text-align:center;top:1497.72px;font-size:27.5px;color:#5f6368">22</div>
<div class="t" style="left:0;width:100px;text-align:center;top:1550.72px;font-size:27.5px;color:#5f6368">23</div>
<div class="t" style="left:0;width:100px;text-align:center;top:1603.72px;font-size:27.5px;color:#5f6368">24</div>
<div class="t" style="left:0;width:100px;text-align:center;top:1656.72px;font-size:27.5px;color:#5f6368">25</div>
<div class="t" style="left:0;width:100px;text-align:center;top:1709.72px;font-size:27.5px;color:#5f6368">26</div>
<div class="t" style="left:0;width:100px;text-align:center;top:1762.72px;font-size:27.5px;color:#5f6368">27</div>
<div class="t" style="left:0;width:100px;text-align:center;top:1815.72px;font-size:27.5px;color:#5f6368">28</div>
<div class="t" style="left:0;width:100px;text-align:center;top:1868.72px;font-size:27.5px;color:#5f6368">29</div>
<div class="t" style="left:0;width:100px;text-align:center;top:1921.72px;font-size:27.5px;color:#5f6368">30</div>
<div class="t" style="left:0;width:100px;text-align:center;top:1974.72px;font-size:27.5px;color:#5f6368">31</div>
<div class="t" style="left:0;width:100px;text-align:center;top:2027.72px;font-size:27.5px;color:#5f6368">32</div>
<div class="t" style="left:0;width:100px;text-align:center;top:2080.72px;font-size:27.5px;color:#5f6368">33</div>
<div class="t" style="left:0;width:100px;text-align:center;top:2133.72px;font-size:27.5px;color:#5f6368">34</div>
<div class="t" style="left:0;width:100px;text-align:center;top:2186.72px;font-size:27.5px;color:#5f6368">35</div>
<div class="a" style="left:0;top:373px;width:2554px;height:1843px;overflow:hidden">
<div class="t" style="left:116.00px;top:11.69px;font-size:33.33px;color:#000;font-weight:bold;">Exercise (PUSH)</div>
<div class="t" style="left:611.30px;top:11.69px;font-size:33.33px;color:#000;font-weight:bold;">Movement Type</div>
<div class="t" style="left:881.30px;top:11.69px;font-size:33.33px;color:#000;font-weight:bold;">Exercise Type</div>
<div class="t" style="left:1306.40px;top:11.69px;font-size:33.33px;color:#000;font-weight:bold;">Equipment</div>
<div class="t" style="left:116.00px;top:64.69px;font-size:33.33px;color:#1155cc;font-weight:normal;text-decoration:underline;text-underline-offset:3px;text-decoration-thickness:2.5px;text-decoration-skip-ink:none;-webkit-text-stroke:0.45px #1155cc">Incline Pushup</div>
<div class="t" style="left:611.30px;top:64.69px;font-size:33.33px;color:#000;font-weight:normal;-webkit-text-stroke:0.45px #000">H-Push</div>
<div class="t" style="left:881.30px;top:64.69px;font-size:33.33px;color:#000;font-weight:normal;-webkit-text-stroke:0.45px #000">Dynamic</div>
<div class="t" style="left:1306.40px;top:64.69px;font-size:33.33px;color:#000;font-weight:normal;-webkit-text-stroke:0.45px #000">Wall/box/elevated surface</div>
<div class="t" style="left:116.00px;top:117.69px;font-size:33.33px;color:#000;font-weight:normal;-webkit-text-stroke:0.45px #000">Kneeling Pushup</div>
<div class="t" style="left:611.30px;top:117.69px;font-size:33.33px;color:#000;font-weight:normal;-webkit-text-stroke:0.45px #000">H-Push</div>
<div class="t" style="left:881.30px;top:117.69px;font-size:33.33px;color:#000;font-weight:normal;-webkit-text-stroke:0.45px #000">Dynamic</div>
<div class="t" style="left:116.00px;top:170.69px;font-size:33.33px;color:#1155cc;font-weight:normal;text-decoration:underline;text-underline-offset:3px;text-decoration-thickness:2.5px;text-decoration-skip-ink:none;-webkit-text-stroke:0.45px #1155cc">BW Pushup</div>
<div class="t" style="left:611.30px;top:170.69px;font-size:33.33px;color:#000;font-weight:normal;-webkit-text-stroke:0.45px #000">H-Push</div>
<div class="t" style="left:881.30px;top:170.69px;font-size:33.33px;color:#000;font-weight:normal;-webkit-text-stroke:0.45px #000">Dynamic</div>
<div class="t" style="left:116.00px;top:223.69px;font-size:33.33px;color:#000;font-weight:normal;-webkit-text-stroke:0.45px #000">AW Pushup</div>
<div class="t" style="left:611.30px;top:223.69px;font-size:33.33px;color:#000;font-weight:normal;-webkit-text-stroke:0.45px #000">H-Push</div>
<div class="t" style="left:881.30px;top:223.69px;font-size:33.33px;color:#000;font-weight:normal;-webkit-text-stroke:0.45px #000">Dynamic</div>
<div class="t" style="left:1306.40px;top:223.69px;font-size:33.33px;color:#000;font-weight:normal;-webkit-text-stroke:0.45px #000">Weight vest, weight belt</div>
<div class="t" style="left:116.00px;top:276.69px;font-size:33.33px;color:#000;font-weight:normal;-webkit-text-stroke:0.45px #000">Diamond Pushup</div>
<div class="t" style="left:611.30px;top:276.69px;font-size:33.33px;color:#000;font-weight:normal;-webkit-text-stroke:0.45px #000">H-Push</div>
<div class="t" style="left:881.30px;top:276.69px;font-size:33.33px;color:#000;font-weight:normal;-webkit-text-stroke:0.45px #000">Dynamic</div>
<div class="t" style="left:116.00px;top:329.69px;font-size:33.33px;color:#1155cc;font-weight:normal;text-decoration:underline;text-underline-offset:3px;text-decoration-thickness:2.5px;text-decoration-skip-ink:none;-webkit-text-stroke:0.45px #1155cc">Decline BW Pushup</div>
<div class="t" style="left:611.30px;top:329.69px;font-size:33.33px;color:#000;font-weight:normal;-webkit-text-stroke:0.45px #000">H-Push</div>
<div class="t" style="left:881.30px;top:329.69px;font-size:33.33px;color:#000;font-weight:normal;-webkit-text-stroke:0.45px #000">Dynamic</div>
<div class="t" style="left:1306.40px;top:329.69px;font-size:33.33px;color:#000;font-weight:normal;-webkit-text-stroke:0.45px #000">Box</div>
<div class="t" style="left:116.00px;top:382.69px;font-size:33.33px;color:#000;font-weight:normal;-webkit-text-stroke:0.45px #000">Archer Pushup</div>
<div class="t" style="left:611.30px;top:382.69px;font-size:33.33px;color:#000;font-weight:normal;-webkit-text-stroke:0.45px #000">H-Push</div>
<div class="t" style="left:881.30px;top:382.69px;font-size:33.33px;color:#000;font-weight:normal;-webkit-text-stroke:0.45px #000">Dynamic</div>
<div class="t" style="left:116.00px;top:435.69px;font-size:33.33px;color:#000;font-weight:normal;-webkit-text-stroke:0.45px #000">Decline Diamond Pushup</div>
<div class="t" style="left:611.30px;top:435.69px;font-size:33.33px;color:#000;font-weight:normal;-webkit-text-stroke:0.45px #000">H-Push</div>
<div class="t" style="left:881.30px;top:435.69px;font-size:33.33px;color:#000;font-weight:normal;-webkit-text-stroke:0.45px #000">Dynamic</div>
<div class="t" style="left:1306.40px;top:435.69px;font-size:33.33px;color:#000;font-weight:normal;-webkit-text-stroke:0.45px #000">Box</div>
<div class="t" style="left:116.00px;top:488.69px;font-size:33.33px;color:#1155cc;font-weight:normal;text-decoration:underline;text-underline-offset:3px;text-decoration-thickness:2.5px;text-decoration-skip-ink:none;-webkit-text-stroke:0.45px #1155cc">BW Pseudo Planche Pushup</div>
<div class="t" style="left:611.30px;top:488.69px;font-size:33.33px;color:#000;font-weight:normal;-webkit-text-stroke:0.45px #000">H-Push</div>
<div class="t" style="left:881.30px;top:488.69px;font-size:33.33px;color:#000;font-weight:normal;-webkit-text-stroke:0.45px #000">Dynamic</div>
<div class="t" style="left:116.00px;top:541.69px;font-size:33.33px;color:#1155cc;font-weight:normal;text-decoration:underline;text-underline-offset:3px;text-decoration-thickness:2.5px;text-decoration-skip-ink:none;-webkit-text-stroke:0.45px #1155cc">AW Pseudo Planche Pushup</div>
<div class="t" style="left:611.30px;top:541.69px;font-size:33.33px;color:#000;font-weight:normal;-webkit-text-stroke:0.45px #000">H-Push</div>
<div class="t" style="left:881.30px;top:541.69px;font-size:33.33px;color:#000;font-weight:normal;-webkit-text-stroke:0.45px #000">Dynamic</div>
<div class="t" style="left:116.00px;top:594.69px;font-size:33.33px;color:#1155cc;font-weight:normal;text-decoration:underline;text-underline-offset:3px;text-decoration-thickness:2.5px;text-decoration-skip-ink:none;-webkit-text-stroke:0.45px #1155cc">Tuck Planche Pushup</div>
<div class="t" style="left:611.30px;top:594.69px;font-size:33.33px;color:#000;font-weight:normal;-webkit-text-stroke:0.45px #000">H-Push</div>
<div class="t" style="left:881.30px;top:594.69px;font-size:33.33px;color:#000;font-weight:normal;-webkit-text-stroke:0.45px #000">Dynamic</div>
<div class="t" style="left:1306.40px;top:594.69px;font-size:33.33px;color:#000;font-weight:normal;-webkit-text-stroke:0.45px #000">Dip bars, parallettes, boxes</div>
<div class="t" style="left:116.00px;top:647.69px;font-size:33.33px;color:#1155cc;font-weight:normal;text-decoration:underline;text-underline-offset:3px;text-decoration-thickness:2.5px;text-decoration-skip-ink:none;-webkit-text-stroke:0.45px #1155cc">BW Ring Pushup</div>
<div class="t" style="left:611.30px;top:647.69px;font-size:33.33px;color:#000;font-weight:normal;-webkit-text-stroke:0.45px #000">H-Push</div>
<div class="t" style="left:881.30px;top:647.69px;font-size:33.33px;color:#000;font-weight:normal;-webkit-text-stroke:0.45px #000">Dynamic</div>
<div class="t" style="left:1306.40px;top:647.69px;font-size:33.33px;color:#000;font-weight:normal;-webkit-text-stroke:0.45px #000">Rings</div>
<div class="t" style="left:116.00px;top:700.69px;font-size:33.33px;color:#1155cc;font-weight:normal;text-decoration:underline;text-underline-offset:3px;text-decoration-thickness:2.5px;text-decoration-skip-ink:none;-webkit-text-stroke:0.45px #1155cc">AW Ring Pushup</div>
<div class="t" style="left:611.30px;top:700.69px;font-size:33.33px;color:#000;font-weight:normal;-webkit-text-stroke:0.45px #000">H-Push</div>
<div class="t" style="left:881.30px;top:700.69px;font-size:33.33px;color:#000;font-weight:normal;-webkit-text-stroke:0.45px #000">Dynamic</div>
<div class="t" style="left:1306.40px;top:700.69px;font-size:33.33px;color:#000;font-weight:normal;-webkit-text-stroke:0.45px #000">Rings</div>
<div class="t" style="left:116.00px;top:753.69px;font-size:33.33px;color:#000;font-weight:normal;-webkit-text-stroke:0.45px #000">Archer Ring Pushup</div>
<div class="t" style="left:611.30px;top:753.69px;font-size:33.33px;color:#000;font-weight:normal;-webkit-text-stroke:0.45px #000">H-Push</div>
<div class="t" style="left:881.30px;top:753.69px;font-size:33.33px;color:#000;font-weight:normal;-webkit-text-stroke:0.45px #000">Dynamic</div>
<div class="t" style="left:1306.40px;top:753.69px;font-size:33.33px;color:#000;font-weight:normal;-webkit-text-stroke:0.45px #000">Rings</div>
<div class="t" style="left:116.00px;top:806.69px;font-size:33.33px;color:#000;font-weight:normal;-webkit-text-stroke:0.45px #000">Pseudo Planche Ring Pushup</div>
<div class="t" style="left:611.30px;top:806.69px;font-size:33.33px;color:#000;font-weight:normal;-webkit-text-stroke:0.45px #000">H-Push</div>
<div class="t" style="left:881.30px;top:806.69px;font-size:33.33px;color:#000;font-weight:normal;-webkit-text-stroke:0.45px #000">Dynamic</div>
<div class="t" style="left:1306.40px;top:806.69px;font-size:33.33px;color:#000;font-weight:normal;-webkit-text-stroke:0.45px #000">Rings</div>
<div class="t" style="left:116.00px;top:859.69px;font-size:33.33px;color:#000;font-weight:normal;-webkit-text-stroke:0.45px #000">Support Hold</div>
<div class="t" style="left:611.30px;top:859.69px;font-size:33.33px;color:#000;font-weight:normal;-webkit-text-stroke:0.45px #000">V-Push</div>
<div class="t" style="left:881.30px;top:859.69px;font-size:33.33px;color:#000;font-weight:normal;-webkit-text-stroke:0.45px #000">Static</div>
<div class="t" style="left:1306.40px;top:859.69px;font-size:33.33px;color:#000;font-weight:normal;-webkit-text-stroke:0.45px #000">Dip bars</div>
<div class="t" style="left:116.00px;top:912.69px;font-size:33.33px;color:#000;font-weight:normal;-webkit-text-stroke:0.45px #000">BW Dip</div>
<div class="t" style="left:611.30px;top:912.69px;font-size:33.33px;color:#000;font-weight:normal;-webkit-text-stroke:0.45px #000">V-Push</div>
<div class="t" style="left:881.30px;top:912.69px;font-size:33.33px;color:#000;font-weight:normal;-webkit-text-stroke:0.45px #000">Dynamic</div>
<div class="t" style="left:1306.40px;top:912.69px;font-size:33.33px;color:#000;font-weight:normal;-webkit-text-stroke:0.45px #000">Dip bars</div>
<div class="t" style="left:116.00px;top:965.69px;font-size:33.33px;color:#1155cc;font-weight:normal;text-decoration:underline;text-underline-offset:3px;text-decoration-thickness:2.5px;text-decoration-skip-ink:none;-webkit-text-stroke:0.45px #1155cc">AW Dip</div>
<div class="t" style="left:611.30px;top:965.69px;font-size:33.33px;color:#000;font-weight:normal;-webkit-text-stroke:0.45px #000">V-Push</div>
<div class="t" style="left:881.30px;top:965.69px;font-size:33.33px;color:#000;font-weight:normal;-webkit-text-stroke:0.45px #000">Dynamic</div>
<div class="t" style="left:1306.40px;top:965.69px;font-size:33.33px;color:#000;font-weight:normal;-webkit-text-stroke:0.45px #000">Dip bars</div>
<div class="t" style="left:116.00px;top:1018.69px;font-size:33.33px;color:#1155cc;font-weight:normal;text-decoration:underline;text-underline-offset:3px;text-decoration-thickness:2.5px;text-decoration-skip-ink:none;-webkit-text-stroke:0.45px #1155cc">Ring Support Hold</div>
<div class="t" style="left:611.30px;top:1018.69px;font-size:33.33px;color:#000;font-weight:normal;-webkit-text-stroke:0.45px #000">V-Push</div>
<div class="t" style="left:881.30px;top:1018.69px;font-size:33.33px;color:#000;font-weight:normal;-webkit-text-stroke:0.45px #000">Static</div>
<div class="t" style="left:1306.40px;top:1018.69px;font-size:33.33px;color:#000;font-weight:normal;-webkit-text-stroke:0.45px #000">Rings</div>
<div class="t" style="left:116.00px;top:1071.69px;font-size:33.33px;color:#1155cc;font-weight:normal;text-decoration:underline;text-underline-offset:3px;text-decoration-thickness:2.5px;text-decoration-skip-ink:none;-webkit-text-stroke:0.45px #1155cc">BW Ring RTO Support Hold</div>
<div class="t" style="left:611.30px;top:1071.69px;font-size:33.33px;color:#000;font-weight:normal;-webkit-text-stroke:0.45px #000">V-Push</div>
<div class="t" style="left:881.30px;top:1071.69px;font-size:33.33px;color:#000;font-weight:normal;-webkit-text-stroke:0.45px #000">Static</div>
<div class="t" style="left:1306.40px;top:1071.69px;font-size:33.33px;color:#000;font-weight:normal;-webkit-text-stroke:0.45px #000">Rings</div>
<div class="t" style="left:116.00px;top:1124.69px;font-size:33.33px;color:#1155cc;font-weight:normal;text-decoration:underline;text-underline-offset:3px;text-decoration-thickness:2.5px;text-decoration-skip-ink:none;-webkit-text-stroke:0.45px #1155cc">BW Ring Dip</div>
<div class="t" style="left:611.30px;top:1124.69px;font-size:33.33px;color:#000;font-weight:normal;-webkit-text-stroke:0.45px #000">V-Push</div>
<div class="t" style="left:881.30px;top:1124.69px;font-size:33.33px;color:#000;font-weight:normal;-webkit-text-stroke:0.45px #000">Dynamic</div>
<div class="t" style="left:1306.40px;top:1124.69px;font-size:33.33px;color:#000;font-weight:normal;-webkit-text-stroke:0.45px #000">Rings</div>
<div class="t" style="left:116.00px;top:1177.69px;font-size:33.33px;color:#000;font-weight:normal;-webkit-text-stroke:0.45px #000">BW RTO Ring Dip</div>
<div class="t" style="left:611.30px;top:1177.69px;font-size:33.33px;color:#000;font-weight:normal;-webkit-text-stroke:0.45px #000">V-Push</div>
<div class="t" style="left:881.30px;top:1177.69px;font-size:33.33px;color:#000;font-weight:normal;-webkit-text-stroke:0.45px #000">Dynamic</div>
<div class="t" style="left:1306.40px;top:1177.69px;font-size:33.33px;color:#000;font-weight:normal;-webkit-text-stroke:0.45px #000">Rings</div>
<div class="t" style="left:116.00px;top:1230.69px;font-size:33.33px;color:#000;font-weight:normal;-webkit-text-stroke:0.45px #000">AW Ring Dip</div>
<div class="t" style="left:611.30px;top:1230.69px;font-size:33.33px;color:#000;font-weight:normal;-webkit-text-stroke:0.45px #000">V-Push</div>
<div class="t" style="left:881.30px;top:1230.69px;font-size:33.33px;color:#000;font-weight:normal;-webkit-text-stroke:0.45px #000">Dynamic</div>
<div class="t" style="left:1306.40px;top:1230.69px;font-size:33.33px;color:#000;font-weight:normal;-webkit-text-stroke:0.45px #000">Rings</div>
<div class="t" style="left:116.00px;top:1283.69px;font-size:33.33px;color:#000;font-weight:normal;-webkit-text-stroke:0.45px #000">AW RTO Ring Dip</div>
<div class="t" style="left:611.30px;top:1283.69px;font-size:33.33px;color:#000;font-weight:normal;-webkit-text-stroke:0.45px #000">V-Push</div>
<div class="t" style="left:881.30px;top:1283.69px;font-size:33.33px;color:#000;font-weight:normal;-webkit-text-stroke:0.45px #000">Dynamic</div>
<div class="t" style="left:1306.40px;top:1283.69px;font-size:33.33px;color:#000;font-weight:normal;-webkit-text-stroke:0.45px #000">Rings</div>
<div class="t" style="left:116.00px;top:1336.69px;font-size:33.33px;color:#000;font-weight:normal;-webkit-text-stroke:0.45px #000">Bulgarian Dip</div>
<div class="t" style="left:611.30px;top:1336.69px;font-size:33.33px;color:#000;font-weight:normal;-webkit-text-stroke:0.45px #000">V-Push</div>
<div class="t" style="left:881.30px;top:1336.69px;font-size:33.33px;color:#000;font-weight:normal;-webkit-text-stroke:0.45px #000">Dynamic</div>
<div class="t" style="left:1306.40px;top:1336.69px;font-size:33.33px;color:#000;font-weight:normal;-webkit-text-stroke:0.45px #000">Rings</div>
<div class="t" style="left:116.00px;top:1389.69px;font-size:33.33px;color:#1155cc;font-weight:normal;text-decoration:underline;text-underline-offset:3px;text-decoration-thickness:2.5px;text-decoration-skip-ink:none;-webkit-text-stroke:0.45px #1155cc">Pike Pushup</div>
<div class="t" style="left:611.30px;top:1389.69px;font-size:33.33px;color:#000;font-weight:normal;-webkit-text-stroke:0.45px #000">V-Push</div>
<div class="t" style="left:881.30px;top:1389.69px;font-size:33.33px;color:#000;font-weight:normal;-webkit-text-stroke:0.45px #000">Dynamic</div>
<div class="t" style="left:116.00px;top:1442.69px;font-size:33.33px;color:#1155cc;font-weight:normal;text-decoration:underline;text-underline-offset:3px;text-decoration-thickness:2.5px;text-decoration-skip-ink:none;-webkit-text-stroke:0.45px #1155cc">Elevated Pike Pushup</div>
<div class="t" style="left:611.30px;top:1442.69px;font-size:33.33px;color:#000;font-weight:normal;-webkit-text-stroke:0.45px #000">V-Push</div>
<div class="t" style="left:881.30px;top:1442.69px;font-size:33.33px;color:#000;font-weight:normal;-webkit-text-stroke:0.45px #000">Dynamic</div>
<div class="t" style="left:1306.40px;top:1442.69px;font-size:33.33px;color:#000;font-weight:normal;-webkit-text-stroke:0.45px #000">Box/elevated surface</div>
<div class="t" style="left:116.00px;top:1495.69px;font-size:33.33px;color:#1155cc;font-weight:normal;text-decoration:underline;text-underline-offset:3px;text-decoration-thickness:2.5px;text-decoration-skip-ink:none;-webkit-text-stroke:0.45px #1155cc">Wall Supported Handstand</div>
<div class="t" style="left:611.30px;top:1495.69px;font-size:33.33px;color:#000;font-weight:normal;-webkit-text-stroke:0.45px #000">V-Push</div>
<div class="t" style="left:881.30px;top:1495.69px;font-size:33.33px;color:#000;font-weight:normal;-webkit-text-stroke:0.45px #000">Static</div>
<div class="t" style="left:116.00px;top:1548.69px;font-size:33.33px;color:#1155cc;font-weight:normal;text-decoration:underline;text-underline-offset:3px;text-decoration-thickness:2.5px;text-decoration-skip-ink:none;-webkit-text-stroke:0.45px #1155cc">WS Handstand Pushup (CtW)</div>
<div class="t" style="left:611.30px;top:1548.69px;font-size:33.33px;color:#000;font-weight:normal;-webkit-text-stroke:0.45px #000">V-Push</div>
<div class="t" style="left:881.30px;top:1548.69px;font-size:33.33px;color:#000;font-weight:normal;-webkit-text-stroke:0.45px #000">Dynamic</div>
<div class="t" style="left:1306.40px;top:1548.69px;font-size:33.33px;color:#000;font-weight:normal;-webkit-text-stroke:0.45px #000">Wall</div>
<div class="t" style="left:116.00px;top:1601.69px;font-size:33.33px;color:#000;font-weight:normal;-webkit-text-stroke:0.45px #000">WS Handstand Pushup (BtW)</div>
<div class="t" style="left:116.00px;top:1654.69px;font-size:33.33px;color:#1155cc;font-weight:normal;text-decoration:underline;text-underline-offset:3px;text-decoration-thickness:2.5px;text-decoration-skip-ink:none;-webkit-text-stroke:0.45px #1155cc">FS Handstand Pushup</div>
<div class="t" style="left:611.30px;top:1654.69px;font-size:33.33px;color:#000;font-weight:normal;-webkit-text-stroke:0.45px #000">V-Push</div>
<div class="t" style="left:881.30px;top:1654.69px;font-size:33.33px;color:#000;font-weight:normal;-webkit-text-stroke:0.45px #000">Dynamic</div>
<div class="t" style="left:116.00px;top:1707.69px;font-size:33.33px;color:#1155cc;font-weight:normal;text-decoration:underline;text-underline-offset:3px;text-decoration-thickness:2.5px;text-decoration-skip-ink:none;-webkit-text-stroke:0.45px #1155cc">FS Handstand Pushup Negative</div>
<div class="t" style="left:611.30px;top:1707.69px;font-size:33.33px;color:#000;font-weight:normal;-webkit-text-stroke:0.45px #000">V-Push</div>
<div class="t" style="left:881.30px;top:1707.69px;font-size:33.33px;color:#000;font-weight:normal;-webkit-text-stroke:0.45px #000">Dynamic</div>
<div class="t" style="left:116.00px;top:1760.69px;font-size:33.33px;color:#1155cc;font-weight:normal;text-decoration:underline;text-underline-offset:3px;text-decoration-thickness:2.5px;text-decoration-skip-ink:none;-webkit-text-stroke:0.45px #1155cc">Dumbbell Planche Raise</div>
<div class="t" style="left:611.30px;top:1760.69px;font-size:33.33px;color:#000;font-weight:normal;-webkit-text-stroke:0.45px #000">H-Push</div>
<div class="t" style="left:881.30px;top:1760.69px;font-size:33.33px;color:#000;font-weight:normal;-webkit-text-stroke:0.45px #000">Dynamic</div>
<div class="t" style="left:116.00px;top:1813.69px;font-size:33.33px;color:#1155cc;font-weight:normal;text-decoration:underline;text-underline-offset:3px;text-decoration-thickness:2.5px;text-decoration-skip-ink:none;-webkit-text-stroke:0.45px #1155cc">Tuck Planche</div>
<div class="t" style="left:611.30px;top:1813.69px;font-size:33.33px;color:#000;font-weight:normal;-webkit-text-stroke:0.45px #000">H-Push</div>
<div class="t" style="left:881.30px;top:1813.69px;font-size:33.33px;color:#000;font-weight:normal;-webkit-text-stroke:0.45px #000">Static</div>
</div>
<div class="a" style="left:109px;top:373px;width:495px;height:3px;background:#1a73e8;"></div>
<div class="a" style="left:109px;top:373px;width:3px;height:53px;background:#1a73e8;"></div>
<div class="a" style="left:599px;top:373px;width:5px;height:43px;background:#1a73e8;"></div>
<div class="a" style="left:109px;top:421px;width:483px;height:5px;background:#1a73e8;"></div>
<div class="a" style="left:593px;top:415px;width:17px;height:17px;background:#1a73e8;border:1.2px solid #fff;box-sizing:border-box"></div>
<div class="a" style="left:2559px;top:375px;width:20px;height:66px;border-radius:10px;background:#dadce0"></div>
<div class="a" style="left:2556px;top:2137px;width:22px;height:2px;background:#dadce0;"></div>
<div class="a" style="left:2556px;top:2139px;width:22px;height:38px;background:#f8f8f8;"></div>
<div class="a" style="left:2556px;top:2177px;width:22px;height:2px;background:#dadce0;"></div>
<div class="a" style="left:2556px;top:2176px;width:17px;height:1px;background:#a9c1ec;"></div>
<div class="a" style="left:2556px;top:2179px;width:22px;height:37px;background:#f8f8f8;"></div>
<svg class="a" style="left:2563.2px;top:2151px;" width="12.8" height="8.2" viewBox="0 0 12.8 8.2" preserveAspectRatio="none"><polygon points="6.4,0 12.8,8.2 0,8.2" fill="#8e8e8e"/></svg>
<svg class="a" style="left:2563.2px;top:2193.8px;" width="12.8" height="8.2" viewBox="0 0 12.8 8.2" preserveAspectRatio="none"><polygon points="0,0 12.8,0 6.4,8.2" fill="#8e8e8e"/></svg>
<div class="a" style="left:0px;top:2216px;width:2578px;height:2px;background:#d9d9d9;"></div>
<div class="a" style="left:0px;top:2218px;width:106px;height:26px;background:#f8f8f8;"></div>
<div class="a" style="left:106px;top:2218px;width:3px;height:26px;background:#e0e0e0;"></div>
<div class="a" style="left:111px;top:2221px;width:774px;height:34px;border-radius:17px;background:#dadce0"></div>
<div class="a" style="left:2475px;top:2218px;width:2px;height:26px;background:#dadce0;"></div>
<div class="a" style="left:2477px;top:2218px;width:38px;height:26px;background:#f8f8f8;"></div>
<div class="a" style="left:2515px;top:2218px;width:2px;height:26px;background:#dadce0;"></div>
<div class="a" style="left:2517px;top:2218px;width:37px;height:26px;background:#f8f8f8;"></div>
<div class="a" style="left:2554px;top:2218px;width:3px;height:26px;background:#dadce0;"></div>
<div class="a" style="left:2557px;top:2218px;width:21px;height:26px;background:#f8f8f8;"></div>
<div class="a" style="left:2554px;top:2139px;width:3px;height:79px;background:#dadce0;"></div>
<svg class="a" style="left:2489px;top:2225.4px;" width="8.4" height="12.6" viewBox="0 0 8.4 12.6" preserveAspectRatio="none"><polygon points="0,6.3 8.4,0 8.4,12.6" fill="#8e8e8e"/></svg>
<svg class="a" style="left:2532px;top:2225.4px;" width="8.4" height="12.6" viewBox="0 0 8.4 12.6" preserveAspectRatio="none"><polygon points="0,0 8.4,6.3 0,12.6" fill="#8e8e8e"/></svg>
</div></body></html>
